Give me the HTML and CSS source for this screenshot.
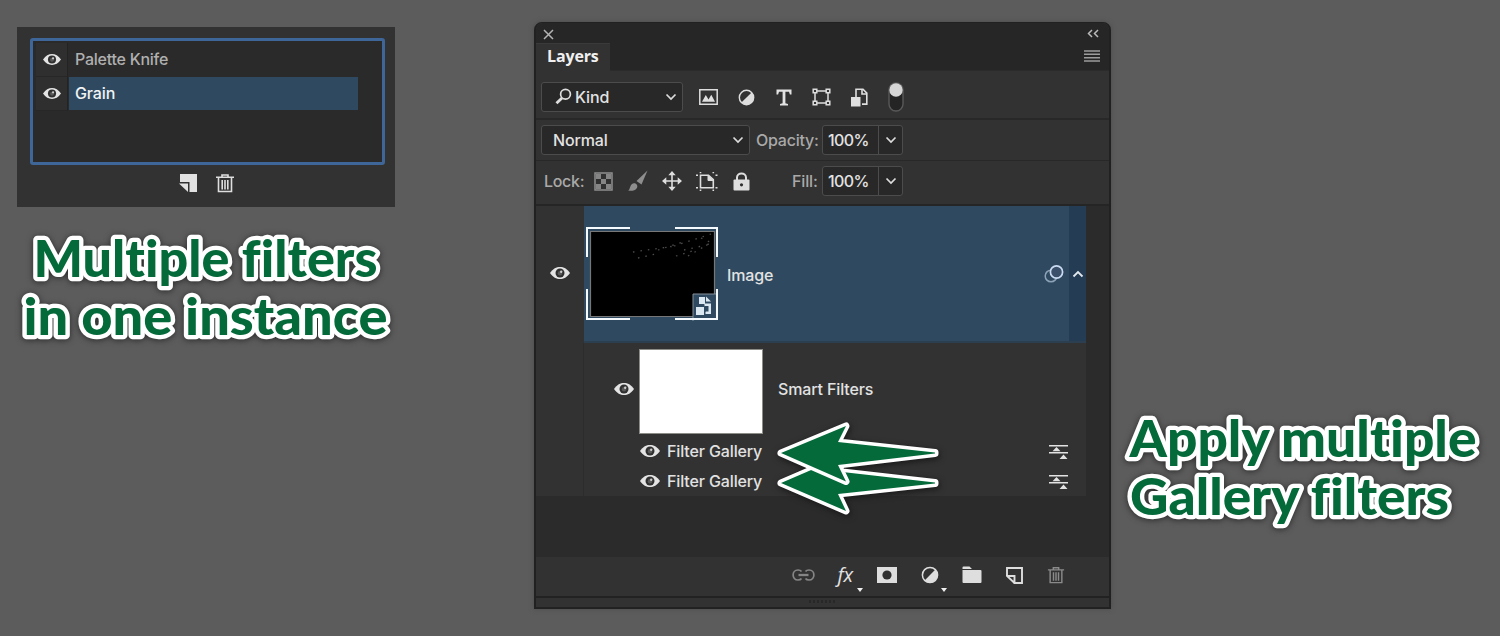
FILE: index.html
```html
<!DOCTYPE html>
<html lang="en">
<head>
<meta charset="utf-8">
<title>Layers</title>
<link rel="stylesheet" href="styles.css">
</head>
<body>
<svg class="defs" width="0" height="0">
  <symbol id="eye" viewBox="0 0 20 14">
    <path d="M0 7C3 2.600 6.300 1 10 1s7 1.600 10 6c-3 4.400-6.300 6-10 6S3 11.400 0 7z" fill="#e4e4e4"/>
    <circle cx="10" cy="7" r="4.500" fill="#303030"/><circle cx="10" cy="7.200" r="2.200" fill="#5a5a5a"/><circle cx="11.200" cy="5.700" r="1.200" fill="#cfcfcf"/>
  </symbol>
  <symbol id="down" viewBox="0 0 12 8"><path d="M1.500 1.500 6 6l4.500-4.500" fill="none" stroke="#dcdcdc" stroke-width="1.700"/></symbol>
  <symbol id="trash" viewBox="0 0 20 20"><g fill="none" stroke="currentColor" stroke-width="1.600"><path d="M1 4.300h18M7 4V2h6v2M3.500 4.500v14h13v-14M7.200 7v9.500M10 7v9.500M12.800 7v9.500"/></g></symbol>
  <symbol id="adjust" viewBox="0 0 18 18"><circle cx="9" cy="9" r="7.600" fill="none" stroke="#dedede" stroke-width="1.500"/><path d="M14.400 3.600A7.600 7.600 0 0 1 3.600 14.400z" fill="#dedede"/></symbol>
  <symbol id="blend" viewBox="0 0 20 16"><path d="M0 1.800h19M0 8.800h19" stroke="#e2e2e2" stroke-width="1.600"/><path d="M3.500 7.200 7.500 3l4 4.200zM10.500 15l4-4.500 4 4.500z" fill="#e2e2e2"/></symbol>
</svg>
<main class="stage">
  <section class="left">
    <div class="gallery">
      <div class="gallery-list">
        <div class="filter-row"><span class="eye-cell"><svg class="eye"><use href="#eye"/></svg></span><span class="filter-name"><span class="t-knife">Palette Knife</span></span></div>
        <div class="filter-row active"><span class="eye-cell"><svg class="eye"><use href="#eye"/></svg></span><span class="filter-name"><span class="t-grain">Grain</span></span></div>
      </div>
      <div class="gallery-tools">
        <svg width="18" height="18" viewBox="0 0 18 18"><path d="M1 0h17v18h-7.500V8H1z" fill="#e2e2e2"/><path d="M0 9.500h9V18z" fill="#e2e2e2"/></svg>
        <svg class="trash" width="20" height="20"><use href="#trash"/></svg>
      </div>
    </div>
    <svg class="headline" width="400" height="130" viewBox="0 225 400 130">
      <text x="33.500" y="277" textLength="344" lengthAdjust="spacingAndGlyphs">Multiple filters</text>
      <text x="23.500" y="334.500" textLength="364" lengthAdjust="spacingAndGlyphs">in one instance</text>
    </svg>
  </section>

  <section class="panel">
    <header class="titlebar">
      <svg width="11" height="11" viewBox="0 0 11 11"><path d="m1 1 9 9M10 1l-9 9" stroke="#b4b4b4" stroke-width="1.500"/></svg>
      <svg width="12" height="9" viewBox="0 0 12 9"><path d="M5 1 1.500 4.500 5 8M11 1 7.500 4.500 11 8" fill="none" stroke="#bababa" stroke-width="1.500"/></svg>
    </header>
    <div class="tabs">
      <span class="tab">Layers</span>
      <svg width="16" height="12" viewBox="0 0 16 12"><path d="M0 1h16M0 4.300h16M0 7.700h16M0 11h16" stroke="#9c9c9c" stroke-width="1.400"/></svg>
    </div>
    <div class="row row-kind">
      <div class="box kind">
        <svg width="17" height="17" viewBox="0 0 17 17"><circle cx="10.500" cy="6.300" r="4.900" fill="none" stroke="#dedede" stroke-width="1.700"/><path d="M7 10 1.500 15.300" stroke="#dedede" stroke-width="2.800"/></svg>
        <span class="t-kind">Kind</span><svg class="down"><use href="#down"/></svg>
      </div>
      <div class="kinds">
        <svg width="19" height="16" viewBox="0 0 19 16"><path d="M.8.8h17.400v14.400H.800z" fill="none" stroke="#dedede" stroke-width="1.500"/><path d="M3 12.800 6.800 6l2.700 4.600 2.800-4.800 3.700 7z" fill="#dedede"/></svg>
        <svg width="17" height="17"><use href="#adjust"/></svg>
        <svg width="16" height="17" viewBox="0 0 16 17"><path d="M.5.500h15v5h-1.600l-.9-2.800H9.400v11.600l2.600.7v1.500H4V15l2.600-.7V2.700H3l-.900 2.800H.500z" fill="#e2e2e2"/></svg>
        <svg width="19" height="18" viewBox="0 0 19 18"><g fill="none" stroke="#dedede" stroke-width="1.500"><path d="M3 4.500v9M16 4.500v9M5 3h9M5 15h9"/><path d="M1.200 1.200h3.600v3.600H1.200zM14.200 1.200h3.600v3.600h-3.600zM1.200 13.200h3.600v3.600H1.200zM14.200 13.200h3.600v3.600h-3.600z"/></g></svg>
        <svg class="smart-kind" width="17" height="19" viewBox="0 0 17 19"><path d="M5 9V1.300h7l3.800 3.800v11H11" fill="none" stroke="#dedede" stroke-width="1.600"/><path d="M11 1v5h5" fill="none" stroke="#dedede" stroke-width="1.600"/><path d="M0 9h9.500v9.500H0z" fill="#dedede"/></svg>
        <svg width="16" height="30" viewBox="0 0 16 30"><rect x="1" y="1" width="14" height="28" rx="7" fill="#242424" stroke="#595959" stroke-width="1.400"/><circle cx="8" cy="8" r="6.700" fill="#d6d6d6"/></svg>
      </div>
    </div>
    <div class="row row-mode">
      <div class="box mode"><span class="t-normal">Normal</span><svg class="down"><use href="#down"/></svg></div>
      <span class="label t-opacity">Opacity:</span>
      <div class="box amount"><span class="value">100%</span><span class="more"><svg class="down"><use href="#down"/></svg></span></div>
    </div>
    <div class="row row-lock">
      <span class="label t-lock">Lock:</span>
      <div class="locks">
        <svg width="19" height="19" viewBox="0 0 19 19"><path d="M1 1h17v17H1z" fill="#303030" stroke="#8e8e8e" stroke-width="1.500"/><path d="M2 2h5v5H2zM12 2h5v5h-5zM7 7h5v5H7zM2 12h5v5H2zM12 12h5v5h-5z" fill="#858585"/></svg>
        <svg width="20" height="22" viewBox="0 0 20 22"><path d="M19.500.5 13.500 14.500 8.500 11zM0 20.500c2-.5 1.700-4 3.500-6 2-2 4.500-1.300 5.500.5 1.500 3-2 7-9 5.500z" fill="#8e8e8e"/></svg>
        <svg width="20" height="20" viewBox="0 0 20 20"><path d="M10 3v14M3 10h14" stroke="#dedede" stroke-width="1.600"/><path d="M10 0l3.700 4.300H6.300zM10 20l3.700-4.300H6.300zM0 10l4.300-3.700v7.400zM20 10l-4.300-3.700v7.400z" fill="#dedede"/></svg>
        <svg width="22" height="19" viewBox="0 0 22 19"><path d="M4.500 3.200h8l4.800 4.500v8H4.500z" fill="none" stroke="#dedede" stroke-width="1.600"/><path d="M12 3v5.500h5.500" fill="#dedede" stroke="#dedede"/><path d="M0 3.200h2M19.500 3.200h2M0 15.700h2M19.500 15.700h2M4.500 0v1.300M17.300 0v1.300M4.500 17.500V19M17.300 17.500V19" stroke="#dedede" stroke-width="1.600"/></svg>
        <svg width="17" height="19" viewBox="0 0 17 19"><path d="M4 8V5.500C4 0 13 0 13 5.500V8" fill="none" stroke="#dedede" stroke-width="2"/><rect x=".5" y="7.500" width="16" height="11" rx="1" fill="#dedede"/><circle cx="8.500" cy="12.800" r="1.600" fill="#303030"/></svg>
      </div>
      <span class="label t-fill">Fill:</span>
      <div class="box amount"><span class="value">100%</span><span class="more"><svg class="down"><use href="#down"/></svg></span></div>
    </div>
    <div class="list">
      <div class="layer">
        <span class="visibility"><svg class="eye"><use href="#eye"/></svg></span>
        <div class="layer-body">
          <svg width="132" height="94" viewBox="0 0 132 94">
            <path d="M4.500 4.500h124v85h-124z" fill="#000" stroke="#777" stroke-width="1.200"/>
            <g stroke="#4d4d4d" stroke-width="1.300" stroke-dasharray="1.500 6"><path d="M47 25l42-6M72 23l28-9M88 19l37-12M98 23l27-6M102 29l24-14M52 31l22-5M90 29l16-5M115 11l11 5"/></g>
            <path d="M107 94V67h23" fill="#2f4a60" stroke="#84909a"/><path d="M108 68h21v23h-21z" fill="#2f4a60"/>
            <path d="M1 30V1h43M89 1h42v29M1 62v30h43M89 92h42V62" fill="none" stroke="#f4fafd" stroke-width="2"/>
            <path d="M110 80h8v8h-8zM113 70h6v7h-6zM120 69.500l5 5h-5zM118.500 77.500H124V86h-4" fill="#dce8f1"/>
            <path d="M118.500 77.500h5.500V86h-4.500" fill="none" stroke="#dce8f1" stroke-width="2"/><path d="M118.500 79h4v5.500h-4z" fill="#2f4a60"/>
          </svg>
          <span class="t-image">Image</span>
          <svg class="fx-badge" width="20" height="18" viewBox="0 0 20 18"><circle cx="7" cy="11" r="5.800" fill="none" stroke="#8da2b6" stroke-width="1.500"/><circle cx="12.500" cy="7" r="6.100" fill="#3a506b" stroke="#cbdcf2" stroke-width="1.700"/></svg>
          <span class="fold"><svg width="12" height="8" viewBox="0 0 12 8"><path d="M1.500 6.500 6 2l4.500 4.500" fill="none" stroke="#e2e8ee" stroke-width="1.800"/></svg></span>
        </div>
      </div>
      <div class="smart">
        <div class="smart-head"><svg class="eye"><use href="#eye"/></svg><span class="mask"></span><span class="t-smart">Smart Filters</span></div>
        <div class="applied"><svg class="eye"><use href="#eye"/></svg><span class="t-applied">Filter Gallery</span><svg class="blend"><use href="#blend"/></svg></div>
        <div class="applied"><svg class="eye"><use href="#eye"/></svg><span class="t-applied">Filter Gallery</span><svg class="blend"><use href="#blend"/></svg></div>
      </div>
    </div>
    <footer class="actions">
      <svg width="23" height="14" viewBox="0 0 23 14"><g fill="none" stroke="#858585" stroke-width="1.700"><path d="M9.500 10.500Q8.500 12 6 12C-.5 12-.5 2 6 2q2.500 0 3.500 1.500M13.500 3.500Q14.500 2 17 2c6.500 0 6.500 10 0 10q-2.500 0-3.500-1.500"/><path d="M6.500 7h10" stroke-width="2.300"/></g></svg>
      <span class="fx">fx</span>
      <svg width="20" height="16" viewBox="0 0 20 16"><path d="M0 0h20v16H0z" fill="#dedede"/><circle cx="10" cy="8" r="4.600" fill="#303030"/></svg>
      <svg width="18" height="18"><use href="#adjust"/></svg>
      <svg width="20" height="18" viewBox="0 0 20 18"><path d="M.500 3V1.500Q.5.500 1.500.5h6L10 3zM.500 4h18Q19.500 4 19.500 5v11q0 1-1 1h-17q-1 0-1-1z" fill="#dedede"/></svg>
      <svg width="17" height="17" viewBox="0 0 17 17"><path d="M1 9V1h15v15H8.500V9H1l7.500 7" fill="none" stroke="#dedede" stroke-width="1.900"/></svg>
      <svg class="dim" width="18" height="20"><use href="#trash"/></svg>
      <svg class="carets" width="92" height="5" viewBox="0 0 92 5"><path d="M1 0h6L4 4zM85 0h6l-3 4z" fill="#f0f0f0"/></svg>
    </footer>
    <div class="grip"><i></i></div>
    <svg class="arrows" width="180" height="106" viewBox="770 415 180 106">
      <path d="M781 483 846 455l-8 16.500 97 11v1L838 494l8 17z"/>
      <path d="M781 453 846 426l-8 16 97 10.500v1L838 465l8 16.500z"/>
    </svg>
  </section>

  <svg class="headline right" width="380" height="140" viewBox="1116 405 380 140">
    <text x="1129.500" y="456.500" textLength="347" lengthAdjust="spacingAndGlyphs">Apply multiple</text>
    <text x="1130" y="514.500" textLength="319" lengthAdjust="spacingAndGlyphs">Gallery filters</text>
  </svg>
</main>
</body>
</html>
```
FILE: styles.css
```css
* { box-sizing: border-box; }
body { margin: 0; background: #5c5c5c; font: 500 16px/20px Inter, "Liberation Sans", sans-serif; letter-spacing: -0.13px; color: #e2e2e2; }
svg { display: block; flex: none; }
.defs { position: absolute; }
.stage { display: flex; align-items: flex-start; width: 1500px; height: 636px; overflow: hidden; }
.eye { width: 20px; height: 14px; }
.down { width: 12px; height: 8px; }
span { white-space: nowrap; }

.left { width: 534px; padding-top: 27px; }
.gallery { width: 378px; height: 180px; margin-left: 17px; padding: 11px 10px 0 13px; background: #323232; }
.gallery-list { height: 127px; border: 3px solid #3e6698; border-radius: 3px; background: #2a2a2a; padding: 2px 24px 0 3px; }
.filter-row { display: flex; height: 34px; }
.eye-cell { width: 32px; border-right: 1px solid #232323; background: #2f2f2f; display: flex; align-items: center; justify-content: center; border-bottom: 1px solid #272727; }
.filter-row .eye { width: 18px; height: 13px; }
.filter-name { flex: 1; padding: 6px 0 0 7px; color: #b0b0b0; }
.t-knife { letter-spacing: -0.25px; }
.filter-row.active .filter-name { background: #2f4a60; color: #f0f3f5; height: 33px; margin-left: 1px; padding-left: 6px; }
.gallery-tools { display: flex; gap: 18px; padding: 8px 0 0 149px; align-items: center; color: #dedede; }
.headline { margin-top: 18px; overflow: visible; filter: drop-shadow(0 1px 3px #2a2a2a); }
.headline text { font: 900 52px Lato, sans-serif; letter-spacing: 0; font-variant-ligatures: none; fill: #046a3a; stroke: #fff; stroke-width: 8.500px; stroke-linejoin: round; paint-order: stroke; }
.right { margin: 405px 0 0 5px; }

.panel { position: relative; width: 577px; height: 587px; margin-top: 22px; border: solid #212121; border-width: 1px 2px; border-radius: 8px 8px 0 0; background: #323232; box-shadow: 0 0 5px #4b4b4b; }
.titlebar { display: flex; justify-content: space-between; align-items: center; height: 20px; padding: 2px 10px 0 7px; background: #262626; border-radius: 7px 7px 0 0; }
.titlebar svg:last-child { margin-top: -1px; }
.tabs { display: flex; justify-content: space-between; height: 28px; background: #262626; padding-right: 9px; border-bottom: 1px solid #2b2b2b; }
.tab { width: 74px; height: 28px; padding: 2px 0 0 11px; border-top: 1px solid #3a3a3a; background: #323232; font: 700 16px/20px "Open Sans", sans-serif; color: #f0f0f0; }
.tabs svg { margin-top: 7px; }
.row { display: flex; align-items: center; padding-left: 5px; }
.row-kind { height: 49px; padding-top: 4px; border-bottom: 2px solid #282828; }
.row-mode { height: 41px; padding-bottom: 1px; border-bottom: 1px solid #282828; }
.row-lock { height: 45px; padding-bottom: 3px; border-bottom: 2px solid #252525; padding-left: 8px; }
.box { display: flex; align-items: center; height: 30px; border: 1px solid #4c4c4c; border-radius: 3px; background: #282828; }
.kind { width: 142px; padding: 0 5px 0 13px; gap: 3px; }
.kind .down { margin-left: auto; }
.kinds { display: grid; grid-template-columns: repeat(6, 37.500px); place-items: center; margin-left: 7px; padding-top: 1px; }
.smart-kind { margin-left: 2px; }
.mode { width: 209px; padding: 0 5px 0 11px; justify-content: space-between; }
.label { color: #a9a9a9; }
.t-opacity { width: 66px; margin-left: 6px; letter-spacing: -0.25px; }
.amount { width: 81px; }
.value { width: 55px; padding-left: 5px; letter-spacing: -0.6px; }
.more { display: grid; place-items: center; width: 24px; height: 28px; border-left: 1px solid #4c4c4c; }
.t-lock { width: 40px; letter-spacing: -0.3px; }
.locks { display: grid; grid-template-columns: 35px 34px 34px 35px 35px; place-items: center; margin-left: 2px; }
.t-fill { margin-left: 33px; width: 30px; }

.list { height: 351px; background: #2b2b2b; }
.layer { display: flex; height: 137px; }
.visibility { width: 48px; background: #323232; padding: 60px 0 0 14px; }
.layer-body { display: flex; align-items: center; width: 502px; background: #2f4a60; border-bottom: 2px solid #2b3f51; padding-left: 2px; gap: 9px; }
.t-image { padding-top: 3px; }
.fx-badge { margin-left: auto; margin-right: -4px; }
.fold { display: grid; place-items: center; align-self: stretch; width: 17px; background: #243d54; }
.smart { width: 550px; height: 153px; background: linear-gradient(90deg, transparent 47px, #2c2c2c 47px, #2c2c2c 48px, transparent 48px), #323232; }
.smart-head { display: flex; align-items: center; height: 92px; padding-left: 78px; }
.mask { width: 124px; height: 85px; margin: 4px 15px 0 5px; background: #fff; border: 1px solid #8d8d88; }
.applied { display: flex; align-items: center; height: 30px; padding: 2px 17px 0 104px; gap: 7px; }
.blend { width: 20px; height: 16px; margin: 2px 0 0 auto; }

.actions { position: relative; display: grid; grid-template-columns: repeat(7, 42.200px); place-items: center; height: 41px; padding: 0 0 3px 246px; border-bottom: 2px solid #222; }
.fx { font: italic 20px/22px "Open Sans", sans-serif; }
.dim { color: #8a8a8a; }
.carets { position: absolute; left: 320px; top: 31px; }
.grip { height: 10px; border-bottom: 1px solid #222; display: flex; justify-content: center; }
.grip i { width: 28px; height: 3px; margin-top: 2px; background: repeating-linear-gradient(90deg, #282828 0 2px, #323232 2px 4px); }
.arrows { position: absolute; left: 234px; top: 392px; filter: drop-shadow(1px 2px 3px #181818); }
.arrows path { fill: #046a3a; stroke: #fff; stroke-width: 7px; stroke-linejoin: round; paint-order: stroke; }
```
